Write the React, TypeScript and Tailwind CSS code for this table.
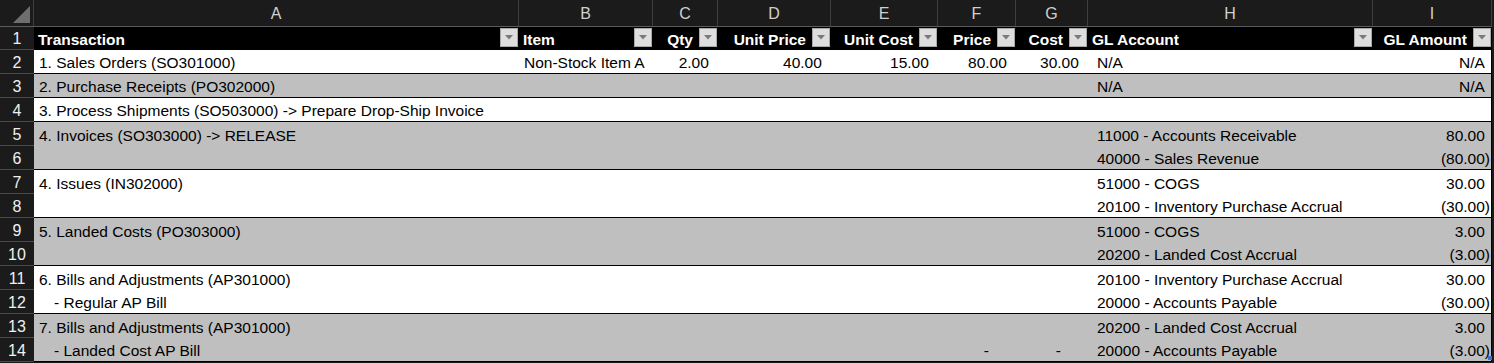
import React from 'react';

const cols = 'grid grid-cols-[34px_485px_134px_65px_113px_107px_78px_72px_285px_119px]';

type Row = {
  n: number;
  a?: string;
  indent?: boolean;
  b?: string;
  c?: string;
  d?: string;
  e?: string;
  f?: string;
  g?: string;
  h?: string;
  i?: string;
  gray: boolean;
  end: boolean;
};

const rows: Row[] = [
  { n: 2, a: '1. Sales Orders (SO301000)', b: 'Non-Stock Item A', c: '2.00', d: '40.00', e: '15.00', f: '80.00', g: '30.00', h: 'N/A', i: 'N/A', gray: false, end: true },
  { n: 3, a: '2. Purchase Receipts (PO302000)', h: 'N/A', i: 'N/A', gray: true, end: true },
  { n: 4, a: '3. Process Shipments (SO503000) -> Prepare Drop-Ship Invoice', gray: false, end: true },
  { n: 5, a: '4. Invoices (SO303000) -> RELEASE', h: '11000 - Accounts Receivable', i: '80.00', gray: true, end: false },
  { n: 6, h: '40000 - Sales Revenue', i: '(80.00)', gray: true, end: true },
  { n: 7, a: '4. Issues (IN302000)', h: '51000 - COGS', i: '30.00', gray: false, end: false },
  { n: 8, h: '20100 - Inventory Purchase Accrual', i: '(30.00)', gray: false, end: true },
  { n: 9, a: '5. Landed Costs (PO303000)', h: '51000 - COGS', i: '3.00', gray: true, end: false },
  { n: 10, h: '20200 - Landed Cost Accrual', i: '(3.00)', gray: true, end: true },
  { n: 11, a: '6. Bills and Adjustments (AP301000)', h: '20100 - Inventory Purchase Accrual', i: '30.00', gray: false, end: false },
  { n: 12, a: '- Regular AP Bill', indent: true, h: '20000 - Accounts Payable', i: '(30.00)', gray: false, end: true },
  { n: 13, a: '7. Bills and Adjustments (AP301000)', h: '20200 - Landed Cost Accrual', i: '3.00', gray: true, end: false },
  { n: 14, a: '- Landed Cost AP Bill', indent: true, f: '-', g: '-', h: '20000 - Accounts Payable', i: '(3.00)', gray: true, end: true },
];

function FilterButton() {
  return (
    <span className="absolute right-[1px] top-[1px] flex h-[19px] w-[18px] items-center justify-center border border-[#a8a8a8] bg-[#dedede]">
      <svg width="8" height="5" viewBox="0 0 8 5">
        <path d="M0 0 L8 0 L4 4.5 Z" fill="#7a7a7a" />
      </svg>
    </span>
  );
}

function Num({ v }: { v?: string }) {
  if (!v) return null;
  const neg = v.startsWith('(');
  return (
    <span>
      {v}
      {!neg && <span className="invisible">)</span>}
    </span>
  );
}

function Dash({ v }: { v?: string }) {
  if (!v) return null;
  return <span className="pr-[23px]">{v}</span>;
}

export default function App() {
  const letters = ['A', 'B', 'C', 'D', 'E', 'F', 'G', 'H', 'I'];
  const head: { t: string; right: boolean }[] = [
    { t: 'Transaction', right: false },
    { t: 'Item', right: false },
    { t: 'Qty', right: true },
    { t: 'Unit Price', right: true },
    { t: 'Unit Cost', right: true },
    { t: 'Price', right: true },
    { t: 'Cost', right: true },
    { t: 'GL Account', right: false },
    { t: 'GL Amount', right: true },
  ];

  return (
    <div className="flex h-[363px] w-[1494px] overflow-hidden bg-[#1b1b1b] font-['Liberation_Sans',Arial,sans-serif] text-[15.5px] leading-none">
      <div className="w-[1492px]">
        {/* column letters */}
        <div className={`${cols} h-[27px] border-b border-[#5a5a5a] text-[#d0d0d0] text-[16px]`}>
          <div className="relative border-r border-[#3e3e3e]">
            <svg className="absolute bottom-[3px] right-[3px]" width="17" height="17" viewBox="0 0 17 17">
              <path d="M17 0 L17 17 L0 17 Z" fill="#6e6e6e" />
            </svg>
          </div>
          {letters.map((l) => (
            <div key={l} className="flex items-center justify-center border-r border-[#3e3e3e] pt-[1px]">
              {l}
            </div>
          ))}
        </div>

        {/* header row 1 */}
        <div className={`${cols} h-[23px]`}>
          <div className="flex items-center justify-center border-b border-[#4a4a4a] bg-[#1b1b1b] pt-[2px] text-[#f0f0f0] text-[16px]">1</div>
          {head.map((h) => (
            <div key={h.t} className="relative flex items-center bg-black px-[4px] pt-[3px] font-bold text-white">
              {h.right ? (
                <span className="ml-auto pr-[21px]">{h.t}</span>
              ) : (
                <span>{h.t}</span>
              )}
              <FilterButton />
            </div>
          ))}
        </div>

        {/* data rows */}
        {rows.map((r) => {
          const bg = r.gray ? 'bg-[#bfbfbf]' : 'bg-white';
          const bd = r.end ? 'border-b border-black' : '';
          return (
            <div key={r.n} className={`${cols} h-[24px]`}>
              <div className="flex items-center justify-center border-b border-[#4a4a4a] bg-[#1b1b1b] pt-[2px] text-[#f0f0f0] text-[16px]">
                {r.n}
              </div>
              <div className={`col-span-9 grid grid-cols-[485px_134px_65px_113px_107px_78px_72px_285px_119px] border-r border-black pt-[3px] ${bg} ${bd} text-black`}>
                <div className={`flex items-center whitespace-nowrap ${r.indent ? 'pl-[20px]' : 'pl-[5px]'}`}>{r.a}</div>
                <div className="flex items-center pl-[5px] whitespace-nowrap">{r.b}</div>
                <div className="flex items-center justify-end pr-[4px]"><Num v={r.c} /></div>
                <div className="flex items-center justify-end pr-[4px]"><Num v={r.d} /></div>
                <div className="flex items-center justify-end pr-[4px]"><Num v={r.e} /></div>
                <div className="flex items-center justify-end pr-[4px]">{r.f === '-' ? <Dash v={r.f} /> : <Num v={r.f} />}</div>
                <div className="flex items-center justify-end pr-[4px]">{r.g === '-' ? <Dash v={r.g} /> : <Num v={r.g} />}</div>
                <div className="flex items-center pl-[9px] whitespace-nowrap">{r.h}</div>
                <div className="relative flex items-center justify-end pr-[2px]">
                  <Num v={r.i} />
                  {r.n === 14 && <span className="absolute bottom-[1px] right-[0px] h-[4px] w-[4px] bg-[#3b6fd1]" />}
                </div>
              </div>
            </div>
          );
        })}
      </div>
      <div className="w-[2px] bg-[#1b1b1b]" />
    </div>
  );
}
